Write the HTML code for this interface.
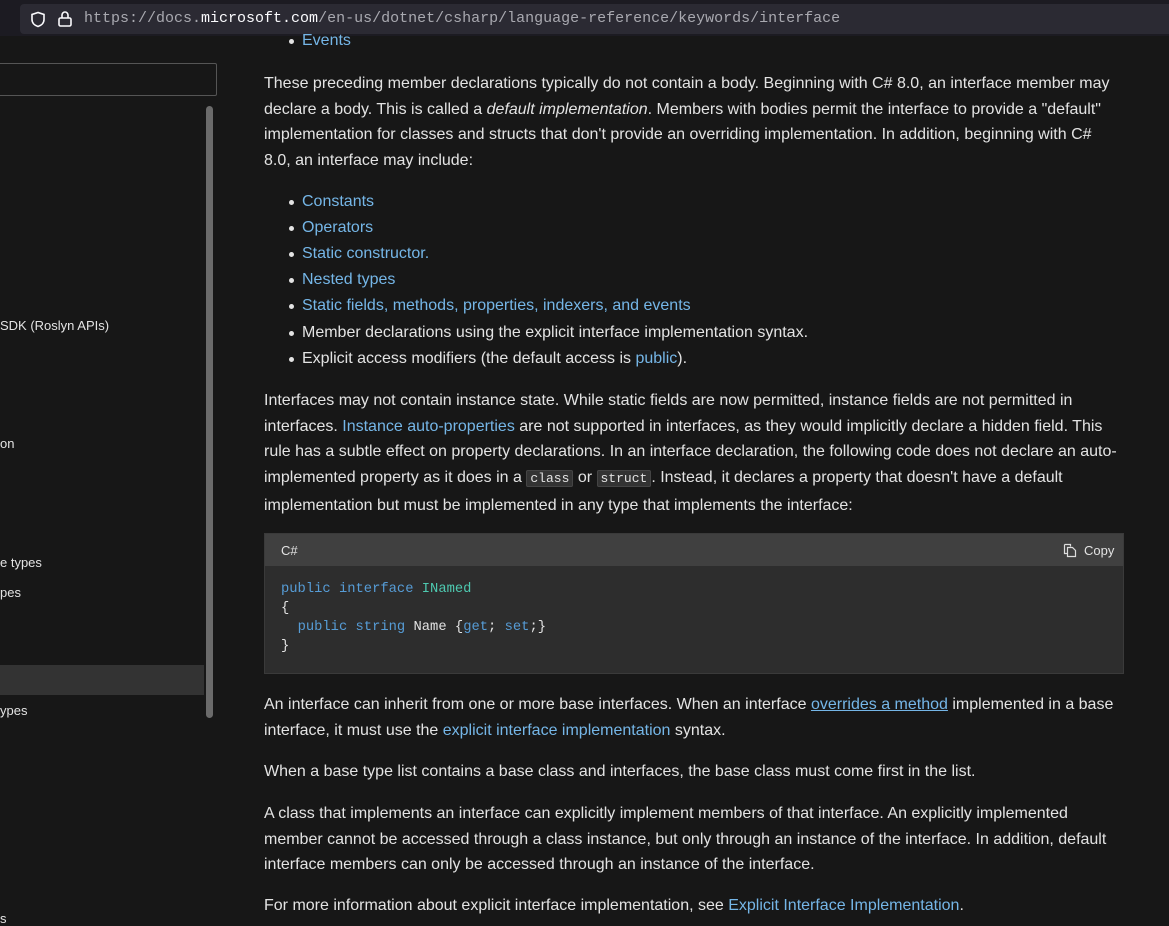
<!DOCTYPE html>
<html><head><style>
body{margin:0;width:1169px;height:923px;overflow:hidden;background:#171717;font-family:"Liberation Sans",sans-serif;color:#e3e3e3;position:relative}
.top{position:absolute;left:0;top:0;width:1169px;height:36px;background:#1c1b22}
.url{position:absolute;left:20px;top:4px;width:1149px;height:30px;background:#2b2a33;border-radius:4px 0 0 4px}
.url span{position:absolute;left:64px;top:6px;font-family:"Liberation Mono",monospace;font-size:15px;color:#a9a9b0;white-space:nowrap}
.url b{font-weight:normal;color:#fbfbfe}
.p{position:absolute;left:264px;font-size:16px;line-height:25.5px;width:880px;white-space:nowrap}
a{color:#75b6e7;text-decoration:none}
a.u{text-decoration:underline}
.li{position:absolute;left:302px;font-size:16px;white-space:nowrap}
.li:before{content:"";position:absolute;left:-13px;top:7px;width:5px;height:5px;border-radius:50%;background:#e3e3e3}
.side{position:absolute;left:0;font-size:13px;color:#e3e3e3;white-space:nowrap}
code{font-family:"Liberation Mono",monospace;font-size:13px;background:#333;border:1px solid #444;padding:0 3px;border-radius:2px}
.code{position:absolute;left:264px;top:533px;width:858px;height:139px;background:#2d2d2d;border:1px solid #3a3a3a}
.ch{height:32px;background:#404040;position:relative;font-size:13px}
pre{margin:0;position:absolute;left:16px;top:46px;font-family:"Liberation Mono",monospace;font-size:13.8px;line-height:19px;color:#e3e3e3}
.k{color:#569cd6}.t{color:#4ec9b0}
</style></head><body>
<div class="top"><div class="url">
<svg style="position:absolute;left:10px;top:7px" width="16" height="17" viewBox="0 0 16 17"><path d="M8 1.5L2 3.5v5c0 3.5 2.7 6 6 7 3.3-1 6-3.5 6-7v-5z" fill="none" stroke="#fbfbfe" stroke-width="1.6"/></svg>
<svg style="position:absolute;left:37px;top:6px" width="16" height="18" viewBox="0 0 16 18"><rect x="2" y="8" width="12" height="8" rx="1.5" fill="none" stroke="#fbfbfe" stroke-width="1.6"/><path d="M5 8V5a3 3 0 0 1 6 0v3" fill="none" stroke="#fbfbfe" stroke-width="1.6"/></svg>
<span>https://docs.<b>microsoft.com</b>/en-us/dotnet/csharp/language-reference/keywords/interface</span></div></div>

<div style="position:absolute;left:-2px;top:63px;width:217px;height:31px;border:1px solid #555;border-radius:2px"></div>
<div style="position:absolute;left:206px;top:106px;width:7px;height:612px;background:#6b6b6b;border-radius:4px"></div>
<div style="position:absolute;left:0;top:665px;width:204px;height:30px;background:#333"></div>
<div class="side" style="top:318px">SDK (Roslyn APIs)</div>
<div class="side" style="top:436px">on</div>
<div class="side" style="top:555px">e types</div>
<div class="side" style="top:585px">pes</div>
<div class="side" style="top:703px">ypes</div>
<div class="side" style="top:911px">s</div>

<div class="li" style="top:32px"><a>Events</a></div>
<div class="p" style="top:71px">These preceding member declarations typically do not contain a body. Beginning with C# 8.0, an interface member may<br>declare a body. This is called a <i>default implementation</i>. Members with bodies permit the interface to provide a "default"<br>implementation for classes and structs that don't provide an overriding implementation. In addition, beginning with C#<br>8.0, an interface may include:</div>
<div class="li" style="top:193px"><a>Constants</a></div>
<div class="li" style="top:219px"><a>Operators</a></div>
<div class="li" style="top:245px"><a>Static constructor.</a></div>
<div class="li" style="top:271px"><a>Nested types</a></div>
<div class="li" style="top:297px"><a>Static fields, methods, properties, indexers, and events</a></div>
<div class="li" style="top:324px">Member declarations using the explicit interface implementation syntax.</div>
<div class="li" style="top:350px">Explicit access modifiers (the default access is <a>public</a>).</div>
<div class="p" style="top:388px">Interfaces may not contain instance state. While static fields are now permitted, instance fields are not permitted in<br>interfaces. <a>Instance auto-properties</a> are not supported in interfaces, as they would implicitly declare a hidden field. This<br>rule has a subtle effect on property declarations. In an interface declaration, the following code does not declare an auto-<br>implemented property as it does in a <code>class</code> or <code>struct</code>. Instead, it declares a property that doesn't have a default</div>
<div class="p" style="top:493px">implementation but must be implemented in any type that implements the interface:</div>
<div class="code"><div class="ch"><span style="position:absolute;left:16px;top:9px">C#</span>
<svg style="position:absolute;left:798px;top:9px" width="14" height="15" viewBox="0 0 14 15"><path d="M1.5 1.5h6v2M1.5 1.5v9h3" fill="none" stroke="#ddd" stroke-width="1.2"/><path d="M4.5 4.5h5l3 3v6h-8z" fill="none" stroke="#ddd" stroke-width="1.2"/></svg>
<span style="position:absolute;left:819px;top:9px">Copy</span></div>
<pre><span class="k">public</span> <span class="k">interface</span> <span class="t">INamed</span>
{
  <span class="k">public</span> <span class="k">string</span> Name {<span class="k">get</span>; <span class="k">set</span>;}
}</pre></div>
<div class="p" style="top:692px">An interface can inherit from one or more base interfaces. When an interface <a class="u">overrides a method</a> implemented in a base<br>interface, it must use the <a>explicit interface implementation</a> syntax.</div>
<div class="p" style="top:759px">When a base type list contains a base class and interfaces, the base class must come first in the list.</div>
<div class="p" style="top:801px">A class that implements an interface can explicitly implement members of that interface. An explicitly implemented<br>member cannot be accessed through a class instance, but only through an instance of the interface. In addition, default<br>interface members can only be accessed through an instance of the interface.</div>
<div class="p" style="top:893px">For more information about explicit interface implementation, see <a>Explicit Interface Implementation</a>.</div>
</body></html>
